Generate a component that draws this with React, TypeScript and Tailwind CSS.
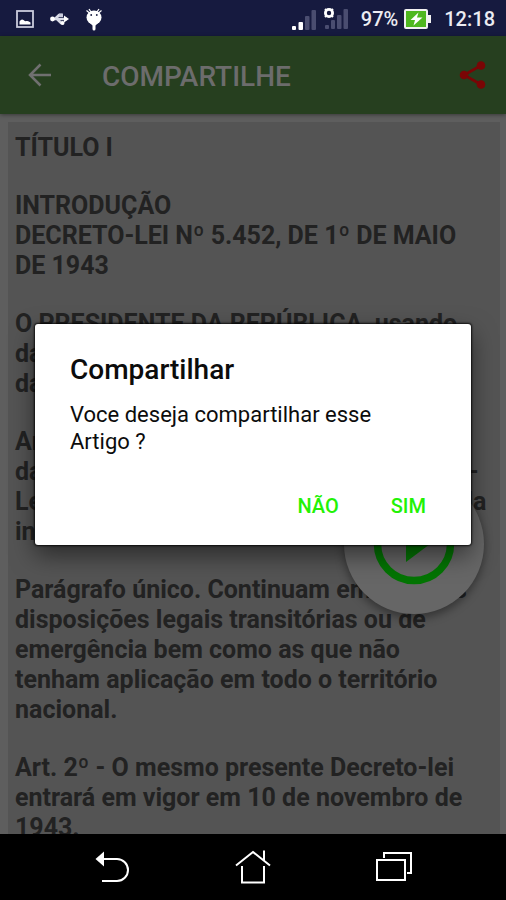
const paragraphs: string[][] = [
  ["TÍTULO I"],
  ["INTRODUÇÃO", "DECRETO-LEI Nº 5.452, DE 1º DE MAIO", "DE 1943"],
  ["O PRESIDENTE DA REPÚBLICA, usando", "da atribuição que lhe confere o art. 180", "da Constituição, DECRETA:"],
  [
    "Art. 1º - Fica aprovada a Consolidação",
    "das Leis do Trabalho, que a este Decreto-",
    "Lei acompanha, com as alterações por ela",
    "introduzidas na legislação vigente.",
  ],
  [
    "Parágrafo único. Continuam em vigor as",
    "disposições legais transitórias ou de",
    "emergência bem como as que não",
    "tenham aplicação em todo o território",
    "nacional.",
  ],
  ["Art. 2º - O mesmo presente Decreto-lei", "entrará em vigor em 10 de novembro de", "1943."],
];

function StatusBar() {
  return (
    <div className="flex h-9 shrink-0 items-center justify-between bg-[#161a3f] pt-[2px] pl-4 pr-[11px] text-[#ececf2]">
      <div className="flex items-center gap-4">
        <svg width="18" height="18" viewBox="0 0 18 18" aria-hidden="true">
          <rect x="1" y="1" width="16" height="16" fill="none" stroke="#c9cbdc" strokeWidth="1.8" />
          <path d="M3.500 14.500v-3q2-3 4-1.500 1 1.500 3 1 2-.5 4 1.500v2z" fill="#fff" />
        </svg>
        <svg width="19" height="14" viewBox="0 0 19 14" aria-hidden="true">
          <path d="M1 7h16M5 7l4-4h3M7 7l4 4h3" fill="none" stroke="#d8dae6" strokeWidth="2.600" />
          <circle cx="2.500" cy="7" r="2.400" fill="#fff" />
          <path d="M14 3.500l5 3.500-5 3.500z" fill="#fff" />
          <path d="M9 1.500h4v3.500H9z" fill="#c9cbdc" />
          <circle cx="12.500" cy="11" r="2" fill="#fff" />
        </svg>
        <svg width="18" height="23" viewBox="0 0 18 23" aria-hidden="true">
          <path d="M4 1l2 3M14 1l-2 3" stroke="#fff" strokeWidth="1.300" />
          <path d="M1.500 2.500l3 2.500M16.500 2.500l-3 2.500" stroke="#fff" strokeWidth="1.200" />
          <ellipse cx="9" cy="9.500" rx="7.500" ry="7" fill="#fff" />
          <path d="M4 14h10l-3.500 3.500V21a1.500 1.500 0 0 1-3 0v-3.500z" fill="#fff" />
          <circle cx="6.200" cy="7" r="0.900" fill="#161a3f" />
          <circle cx="11.800" cy="7" r="0.900" fill="#161a3f" />
        </svg>
      </div>
      <div className="flex items-center">
        <svg className="mr-3" width="58" height="24" viewBox="0 0 58 24" aria-hidden="true">
          <g fill="#fff">
            <rect x="1" y="19" width="4" height="4" rx="1" />
            <rect x="7.500" y="15" width="4.500" height="8" rx="1" />
          </g>
          <g fill="#4a4d70">
            <rect x="14" y="9" width="4.500" height="14" rx="1" />
            <rect x="20.500" y="3" width="4.500" height="20" rx="1" />
            <rect x="34" y="18" width="4" height="4" rx="1" />
            <rect x="40" y="13" width="4" height="9" rx="1" />
            <rect x="46" y="8" width="4.500" height="14" rx="1" />
            <rect x="52.500" y="2" width="4.500" height="20" rx="1" />
          </g>
          <circle cx="38" cy="6" r="3.600" fill="#161a3f" stroke="#fff" strokeWidth="2.800" />
          <path d="M34 2l1.500 1.500M42 2l-1.500 1.500M34 10l1.500-1.500M42 10l-1.500-1.500" stroke="#fff" strokeWidth="2" />
        </svg>
        <span className="text-[20px] leading-6 font-medium">97%</span>
        <svg className="ml-[6px] mr-3" width="28" height="20" viewBox="0 0 28 20" aria-hidden="true">
          <rect x="1" y="1" width="22" height="18" rx="1" fill="#4fb81f" stroke="#f2f2f2" strokeWidth="2" />
          <rect x="24" y="6" width="3" height="8" fill="#f2f2f2" />
          <path d="M14.500 3.500L6.500 11H11l-1.500 5.500L18.500 8.500H13z" fill="#fff" />
        </svg>
        <span className="text-[20px] leading-6 font-medium">12:18</span>
      </div>
    </div>
  );
}

function AppBar() {
  return (
    <header className="flex h-[78px] shrink-0 items-center bg-[#263f1f] pl-7 pr-[19px] shadow-[0_1px_4px_#00000066]">
      <button type="button" aria-label="Voltar">
        <svg width="24" height="24" viewBox="0 0 24 24" fill="none" stroke="#707070" strokeWidth="2.500" aria-hidden="true">
          <path d="M23 12H3M12.500 1.500L2 12l10.500 10.500" />
        </svg>
      </button>
      <h1 className="ml-[50px] flex-1 pt-1 text-[28px] leading-8 font-medium text-[#6c6c6c]">COMPARTILHE</h1>
      <button type="button" aria-label="Compartilhar">
        <svg width="28" height="28" viewBox="0 0 28 28" aria-hidden="true">
          <path d="M22 4.500L5 14l17 9.500" fill="none" stroke="#7a0505" strokeWidth="2.600" />
          <g fill="#7a0505">
            <circle cx="22" cy="4.500" r="4.300" />
            <circle cx="5" cy="14" r="4.300" />
            <circle cx="22" cy="23.500" r="4.300" />
          </g>
        </svg>
      </button>
    </header>
  );
}

function ConfirmDialog() {
  return (
    <div className="absolute inset-0 flex items-center px-[35px] pb-[2px]">
      <div
        role="dialog"
        aria-labelledby="dialog-title"
        className="w-full rounded-[3px] bg-white px-[35px] pt-[30px] pb-[21px] text-[#0c0c0c] shadow-[0_0_2px_1px_#000000cc,0_10px_24px_#00000080]"
      >
        <h2 id="dialog-title" className="text-[28px] leading-8 font-medium">
          Compartilhar
        </h2>
        <p className="mt-[15px] text-[22px] leading-[27px]">
          Voce deseja compartilhar esse
          <br />
          Artigo ?
        </p>
        <div className="mt-[33px] flex justify-end gap-7 text-[20px] leading-9 font-medium text-[#22f205]">
          <button type="button" className="px-3">
            NÃO
          </button>
          <button type="button" className="pl-3 pr-[10px]">
            SIM
          </button>
        </div>
      </div>
    </div>
  );
}

function NavigationBar() {
  return (
    <nav className="grid h-[66px] shrink-0 grid-cols-3 place-items-center bg-black px-[42px]">
      <button type="button" aria-label="Voltar">
        <svg width="36" height="36" viewBox="0 0 36 36" fill="none" stroke="#fff" strokeWidth="2" aria-hidden="true">
          <path d="M8 10h15a11 11 0 0 1 0 22H8" />
          <path d="M1.500 10L10 2.500v15z" fill="#fff" stroke="none" />
        </svg>
      </button>
      <button type="button" aria-label="Início">
        <svg width="36" height="36" viewBox="0 0 36 36" fill="none" stroke="#fff" strokeWidth="2" aria-hidden="true">
          <path d="M1 16.500L18 3l17 13.500M29 1.500v10M7 17v16.500h22V17" />
        </svg>
      </button>
      <button type="button" aria-label="Recentes">
        <svg width="36" height="32" viewBox="0 0 36 32" fill="none" stroke="#fff" strokeWidth="2" aria-hidden="true">
          <path d="M1 9h28v20H1zM8 7V2h27v20h-4" />
        </svg>
      </button>
    </nav>
  );
}

export default function App() {
  return (
    <div className="flex h-screen flex-col overflow-hidden font-[Roboto,sans-serif]">
      <StatusBar />
      <main className="relative flex min-h-0 flex-1 flex-col bg-[#5e5e5e]">
        <AppBar />
        <article className="ml-2 mr-[6px] mt-2 flex min-h-0 flex-1 flex-col gap-7 overflow-hidden bg-[#545454] pl-[7px] pt-[11px] text-[25px] leading-[30px] font-bold whitespace-nowrap text-[#222222]">
          {paragraphs.map((lines) => (
            <p key={lines[0]}>
              {lines.map((line) => (
                <span key={line} className="block">
                  {line}
                </span>
              ))}
            </p>
          ))}
        </article>
        <button
          type="button"
          aria-label="Ouvir"
          className="absolute right-[22px] bottom-[220px] flex size-[140px] items-center justify-center rounded-full bg-[#666666] shadow-[0_4px_10px_#00000066]"
        >
          <svg width="82" height="82" viewBox="0 0 82 82" aria-hidden="true">
            <circle cx="41" cy="41" r="36.500" fill="none" stroke="#037503" strokeWidth="7.500" />
            <path d="M33 23v36l24-18z" fill="#037503" />
          </svg>
        </button>
        <ConfirmDialog />
      </main>
      <NavigationBar />
    </div>
  );
}
